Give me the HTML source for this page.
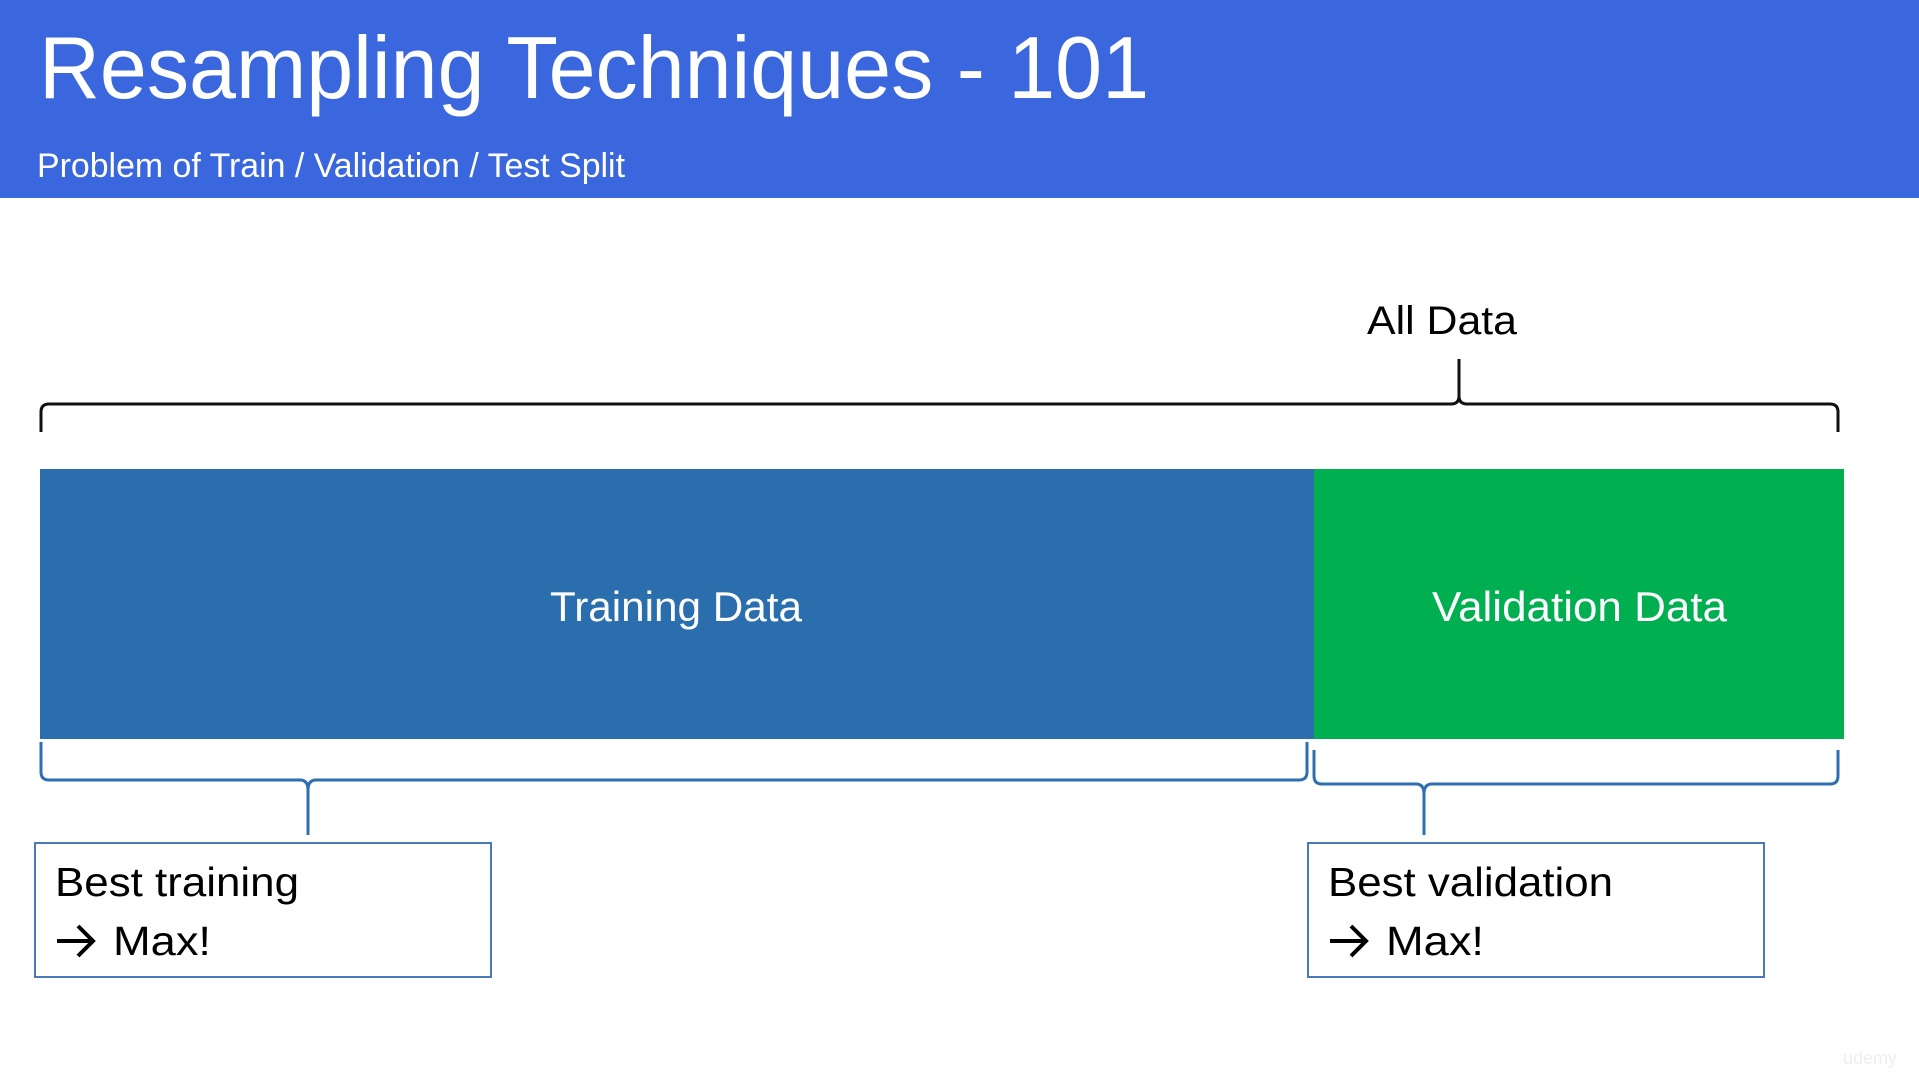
<!DOCTYPE html>
<html><head><meta charset="utf-8"><style>
html,body{margin:0;padding:0;background:#fff;width:1919px;height:1076px;overflow:hidden}
svg{display:block}
text{font-family:"Liberation Sans",sans-serif}
</style></head><body>
<svg width="1919" height="1076" viewBox="0 0 1919 1076" xmlns="http://www.w3.org/2000/svg">
<rect x="0" y="0" width="1919" height="198" fill="#3a67dd"/>
<text x="39" y="98" font-size="88" fill="#fff" textLength="1110" lengthAdjust="spacingAndGlyphs">Resampling Techniques - 101</text>
<text x="37" y="177" font-size="34" fill="#fff" textLength="588" lengthAdjust="spacingAndGlyphs">Problem of Train / Validation / Test Split</text>

<text x="1367" y="334" font-size="40" fill="#000" textLength="150" lengthAdjust="spacingAndGlyphs">All Data</text>
<path d="M41 432 L41 412 Q41 404 49 404 L1451 404 Q1459 404 1459 396 L1459 359 M1459 396 Q1459 404 1467 404 L1830 404 Q1838 404 1838 412 L1838 432" fill="none" stroke="#111" stroke-width="3"/>

<rect x="40" y="469" width="1274" height="270" fill="#2a6ead"/>
<rect x="1314" y="469" width="530" height="270" fill="#00b050"/>
<text x="550" y="621" font-size="42" fill="#fff" textLength="252" lengthAdjust="spacingAndGlyphs">Training Data</text>
<text x="1432" y="621" font-size="42" fill="#fff" textLength="295" lengthAdjust="spacingAndGlyphs">Validation Data</text>

<path d="M41 742 L41 772 Q41 780 49 780 L300 780 Q308 780 308 790 L308 835 M308 790 Q308 780 316 780 L1299 780 Q1307 780 1307 772 L1307 742" fill="none" stroke="#2e6fb0" stroke-width="3"/>
<path d="M1314 750 L1314 776 Q1314 784 1322 784 L1416 784 Q1424 784 1424 794 L1424 835 M1424 794 Q1424 784 1432 784 L1830 784 Q1838 784 1838 776 L1838 750" fill="none" stroke="#2e6fb0" stroke-width="3"/>

<rect x="35" y="843" width="456" height="134" fill="#fff" stroke="#4a78b8" stroke-width="2"/>
<text x="55" y="896" font-size="41" fill="#000" textLength="244" lengthAdjust="spacingAndGlyphs">Best training</text>
<path d="M57 941 L93 941 M78 926 L93 941 L78 956" fill="none" stroke="#000" stroke-width="4"/>
<text x="113" y="955" font-size="41" fill="#000" textLength="98" lengthAdjust="spacingAndGlyphs">Max!</text>

<rect x="1308" y="843" width="456" height="134" fill="#fff" stroke="#4a78b8" stroke-width="2"/>
<text x="1328" y="896" font-size="41" fill="#000" textLength="285" lengthAdjust="spacingAndGlyphs">Best validation</text>
<path d="M1330 941 L1366 941 M1351 926 L1366 941 L1351 956" fill="none" stroke="#000" stroke-width="4"/>
<text x="1386" y="955" font-size="41" fill="#000" textLength="98" lengthAdjust="spacingAndGlyphs">Max!</text>

<text x="1843" y="1064" font-size="18" fill="#eeeeee">udemy</text>
</svg>
</body></html>
